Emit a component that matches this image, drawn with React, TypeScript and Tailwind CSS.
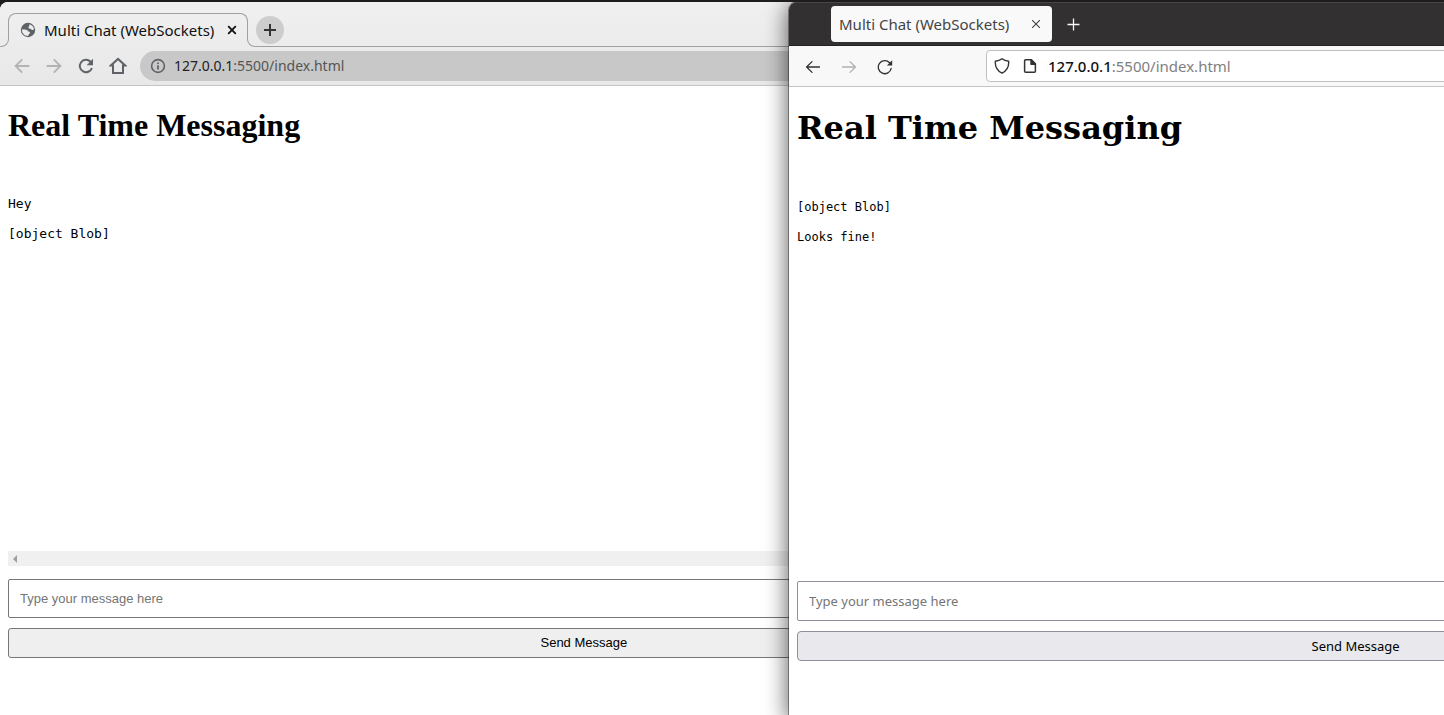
import React from 'react';

function GlobeIcon() {
  return (
    <svg width="16" height="16" viewBox="0 0 16 16">
      <circle cx="8" cy="8" r="7.200" fill="#5f6368" />
      <path d="M9.300 2.300c2.600.5 4.400 2.500 4.700 5-.8.9-2 .8-2.600.1-.5-.6-1.500-.4-2.200-.8-.9-.6-1-1.600-.3-2.200.7-.5.300-1.300.4-2.100z" fill="#ededed" />
      <path d="M1.900 7.600c1.600-.1 3.600 0 4.900.4 1.300.4 1.200 1.500 2.300 1.800 1.100.3 1.200 1.400.3 2-.9.500-.9 1.500-1.500 2.300-3.400 0-6.100-2.900-6-6.500z" fill="#ededed" />
    </svg>
  );
}

function ChromiumBack() {
  return (
    <svg width="16" height="16" viewBox="0 0 16 16" fill="none" stroke="currentColor" strokeWidth="1.900">
      <path d="M15.300 8H2M8.200 1.300 1.600 8l6.600 6.700" />
    </svg>
  );
}

function ChromiumForward() {
  return (
    <svg width="16" height="16" viewBox="0 0 16 16" fill="none" stroke="currentColor" strokeWidth="1.900">
      <path d="M.7 8H14M7.800 1.300 14.400 8l-6.600 6.700" />
    </svg>
  );
}

function ChromiumReload() {
  return (
    <svg width="16" height="16" viewBox="0 0 16 16" fill="none" stroke="currentColor" strokeWidth="2">
      <path d="M13.900 10A6.200 6.200 0 1 1 12.500 3.700L13.500 4.700" />
      <path d="M15 .8v6.400H8.600z" fill="currentColor" stroke="none" />
    </svg>
  );
}

function HomeIcon() {
  return (
    <svg width="18" height="18" viewBox="0 0 18 18" fill="none" stroke="currentColor" strokeWidth="2">
      <path d="M4 16V8.500H1.800L9 1.900l7.200 6.600H14V16z" />
    </svg>
  );
}

function InfoIcon() {
  return (
    <svg width="16" height="16" viewBox="0 0 16 16" fill="none" stroke="currentColor" strokeWidth="1.600">
      <circle cx="8" cy="8" r="6.400" />
      <path d="M8 7.200v4.400M8 4.400v1.700" strokeWidth="1.800" />
    </svg>
  );
}

function BackArrow() {
  return (
    <svg width="16" height="16" viewBox="0 0 16 16" fill="none" stroke="currentColor" strokeWidth="1.300" strokeLinecap="round" strokeLinejoin="round">
      <path d="M14.500 8H1.700M7 2.600 1.600 8 7 13.400" />
    </svg>
  );
}

function ForwardArrow() {
  return (
    <svg width="16" height="16" viewBox="0 0 16 16" fill="none" stroke="currentColor" strokeWidth="1.300" strokeLinecap="round" strokeLinejoin="round">
      <path d="M1.500 8h12.800M9 2.600 14.400 8 9 13.400" />
    </svg>
  );
}

function ReloadIcon() {
  return (
    <svg width="16" height="16" viewBox="0 0 16 16" fill="none" stroke="currentColor" strokeWidth="1.300" strokeLinecap="round">
      <path d="M14.200 9.400A6.500 6.500 0 1 1 12.600 3.800" />
      <path d="M15.200 1.200v5.300H9.900z" fill="currentColor" stroke="none" />
    </svg>
  );
}

function ShieldIcon() {
  return (
    <svg width="16" height="16" viewBox="0 0 16 16" fill="none" stroke="currentColor" strokeWidth="1.400" strokeLinejoin="round">
      <path d="M8 .8C9.800 2.200 12 3 14.700 3.300c.3 5.500-1.700 9.600-6.700 11.900C3 12.900 1 8.800 1.300 3.300 4 3 6.200 2.200 8 .8z" />
    </svg>
  );
}

function PageIcon() {
  return (
    <svg width="16" height="16" viewBox="0 0 16 16" fill="none" stroke="currentColor" strokeWidth="1.500" strokeLinejoin="round">
      <path d="M3.600 1.700h5.800l4 4v7.600a1 1 0 0 1-1 1H3.600a1 1 0 0 1-1-1V2.700a1 1 0 0 1 1-1z" />
      <path d="M9 1.700v4.500h4.400z" fill="currentColor" />
    </svg>
  );
}

function ChromiumWindow() {
  return (
    <section className="flex w-[148%] shrink-0 flex-col rounded-tl-lg bg-white">
      <header className="rounded-tl-lg bg-linear-to-b from-[#f0f0f0] to-[#e8e8e8]">
        <div className="flex h-[45px] items-end">
          <span className="h-[25px] w-[9px] rounded-br-lg border-r border-b border-[#a0a0a0]" />
          <div className="relative -ml-px flex h-[34px] w-[240px] items-center pr-[11px] pl-3">
            <span className="pointer-events-none absolute inset-x-0 top-0 h-[14px] rounded-t-lg border-x border-t border-[#a0a0a0]" />
            <GlobeIcon />
            <span className="ml-2 flex-1 font-['Noto_Sans',sans-serif] text-[15px] whitespace-nowrap text-[#111111]">Multi Chat (WebSockets)</span>
            <button aria-label="Close tab" className="text-[#111111]">
              <svg width="10" height="10" viewBox="0 0 10 10" stroke="currentColor" strokeWidth="1.800"><path d="m1.200 1.200 7.600 7.600M8.800 1.200 1.200 8.800" /></svg>
            </button>
          </div>
          <div className="relative -ml-px flex h-[34px] flex-1 items-center pl-[9px]">
            <span className="pointer-events-none absolute inset-x-0 top-[9px] bottom-0 rounded-bl-lg border-b border-l border-[#a0a0a0]" />
            <button aria-label="New tab" className="relative flex size-7 items-center justify-center rounded-full bg-[#cdcdcd] text-[#333333]">
              <svg width="12" height="12" viewBox="0 0 12 12" stroke="currentColor" strokeWidth="2"><path d="M6 0v12M0 6h12" /></svg>
            </button>
          </div>
        </div>
        <nav className="flex h-[39px] items-center border-b border-[#c4c4c4] pl-[14px]">
          <div className="flex items-center gap-4 text-[#5f6368]">
            <button aria-label="Back" className="text-[#b3b3b3]"><ChromiumBack /></button>
            <button aria-label="Forward" className="text-[#b3b3b3]"><ChromiumForward /></button>
            <button aria-label="Reload"><ChromiumReload /></button>
            <button aria-label="Home" className="-ml-px"><HomeIcon /></button>
          </div>
          <div className="ml-[13px] flex h-[30px] flex-1 items-center gap-2 rounded-l-full bg-[#c8c8c8] pl-[10px]">
            <span className="text-[#5f6368]"><InfoIcon /></span>
            <span className="font-['Noto_Sans',sans-serif] text-sm text-[#555555]"><span className="text-[#222222]">127.0.0.1</span>:5500/index.html</span>
          </div>
        </nav>
      </header>
      <main className="px-2 pt-[21px]">
        <h1 className="mb-[22px] font-['Liberation_Serif',serif] text-[32px] leading-[37px] font-bold text-black">Real Time Messaging</h1>
        <div className="flex h-[400px] flex-col text-[13px] leading-[15px] text-black">
          <div className="flex flex-1 flex-col gap-[15px] pt-[30px]">
            <pre className="font-['DejaVu_Sans_Mono',monospace]">Hey</pre>
            <pre className="font-['DejaVu_Sans_Mono',monospace]">[object Blob]</pre>
          </div>
          <div className="flex h-[15px] items-center bg-[#f0f0f0] pl-[5px] text-[#a0a0a0]">
            <svg width="4" height="8" viewBox="0 0 4 8" fill="currentColor"><path d="M4 0v8L0 4z" /></svg>
          </div>
        </div>
        <input aria-label="Message" placeholder="Type your message here" className="mt-[13px] block h-[39px] w-full rounded-[2px] border border-[#767676] bg-white px-[11px] font-['Liberation_Sans',sans-serif] text-[13px] placeholder:text-[#757575]" />
        <button className="mt-[10px] block h-[30px] w-full rounded-[3px] border border-[#767676] bg-[#efefef] font-['Liberation_Sans',sans-serif] text-[13px] text-black">Send Message</button>
      </main>
    </section>
  );
}

function FirefoxWindow() {
  return (
    <section className="relative z-10 flex w-[173%] shrink-0 flex-col overflow-hidden rounded-tl-lg bg-white shadow-[0_0_0_1px_rgba(0,0,0,0.35),0_4px_22px_2px_rgba(0,0,0,0.6)]">
      <header>
        <div className="flex h-[44px] items-center border-t border-b border-t-[#484646] border-b-[#222222] bg-[#323031] pl-[42px]">
          <div className="flex h-9 w-[221px] items-center justify-between rounded bg-[#f9f9f9] px-2">
            <span className="font-['Noto_Sans',sans-serif] text-[15px] whitespace-nowrap text-[#444444]">Multi Chat (WebSockets)</span>
            <button aria-label="Close tab" className="flex size-4 items-center justify-center text-[#444444]">
              <svg width="8" height="8" viewBox="0 0 8 8" stroke="currentColor" strokeWidth="1.100"><path d="m0 0 8 8M8 0 0 8" /></svg>
            </button>
          </div>
          <button aria-label="New tab" className="ml-[15px] text-[#f9f9f9]">
            <svg width="13" height="13" viewBox="0 0 13 13" stroke="currentColor" strokeWidth="1.300"><path d="M6.500 .5v12M.5 6.500h12" /></svg>
          </button>
        </div>
        <nav className="flex h-[41px] items-center border-b border-[#c4c4c4] bg-[#f8f8f8] pl-4 text-[#333333]">
          <div className="flex items-center gap-5 pt-px">
            <button aria-label="Back"><BackArrow /></button>
            <button aria-label="Forward" className="text-[#b0b0b0]"><ForwardArrow /></button>
            <button aria-label="Reload"><ReloadIcon /></button>
          </div>
          <div className="ml-[93px] flex h-8 flex-1 items-center rounded-l border border-[#c0c0c0] bg-white pl-[7px]">
            <ShieldIcon />
            <span className="ml-3"><PageIcon /></span>
            <span className="ml-[10px] font-['Noto_Sans',sans-serif] text-[15px] text-[#808080]"><span className="font-medium text-[#111111]">127.0.0.1</span>:5500/index.html</span>
          </div>
        </nav>
      </header>
      <main className="px-2 pt-[22px]">
        <h1 className="mb-[21px] font-['DejaVu_Serif',serif] text-[32px] leading-[38px] font-bold text-black">Real Time Messaging</h1>
        <div className="flex h-[400px] flex-col gap-[15px] pt-8 text-xs leading-[15px] text-black">
          <pre className="font-['DejaVu_Sans_Mono',monospace]">[object Blob]</pre>
          <pre className="font-['DejaVu_Sans_Mono',monospace]">Looks fine!</pre>
        </div>
        <input aria-label="Message" placeholder="Type your message here" className="mt-[13px] block h-10 w-full rounded-[2px] border border-[#8f8f9d] bg-white px-[11px] font-['Noto_Sans',sans-serif] text-[13px] placeholder:text-[#757575]" />
        <button className="mt-[10px] block h-[30px] w-full rounded border border-[#8f8f9d] bg-[#e9e9ed] pt-px font-['Noto_Sans',sans-serif] text-[13px] text-black">Send Message</button>
      </main>
    </section>
  );
}

export default function App() {
  return (
    <div className="grid min-h-screen grid-cols-[789fr_655fr] overflow-hidden border-t-2 border-[#1e1c1d] bg-[#1e1c1d]">
      <div className="flex min-w-0"><ChromiumWindow /></div>
      <div className="flex min-w-0"><FirefoxWindow /></div>
    </div>
  );
}
